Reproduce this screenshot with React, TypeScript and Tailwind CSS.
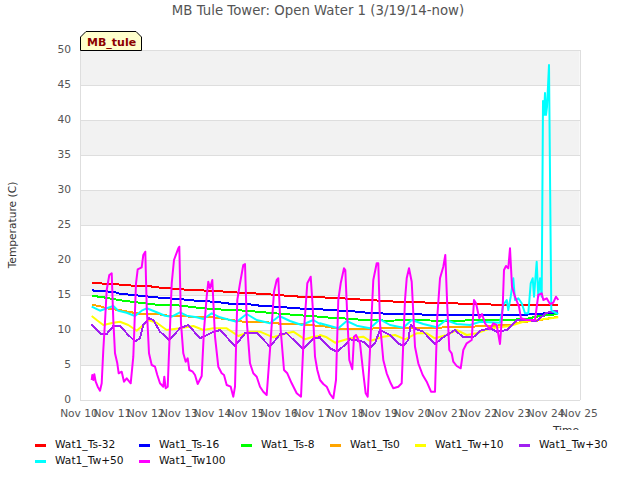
import React from 'react';

type Pt = [number, number];

// traced from the plot; x/3 + offset, 240 + y/3 gives page pixels
const left = (p: Pt[]) => p.map(([x, y]) => `${(x / 3).toFixed(1)},${(240 + y / 3).toFixed(1)}`).join(' ');
const right = (p: Pt[]) => p.map(([x, y]) => `${(320 + x / 3).toFixed(1)},${(240 + y / 3).toFixed(1)}`).join(' ');

const series: { color: string; crisp?: boolean; l: Pt[]; r: Pt[] }[] = [
  {
    color: '#ff0000',
    crisp: true,
    l: [[275,128],[295,130],[350,133],[400,137],[450,139],[480,143],[520,146],[560,149],[600,151],[660,154],[700,157],[760,160],[820,164],[900,170],[960,172]],
    r: [[0,172],[50,174],[100,177],[140,180],[200,183],[240,186],[310,186],[320,189],[400,189],[420,191],[510,192],[515,195],[715,195]],
  },
  {
    color: '#0000ff',
    crisp: true,
    l: [[275,150],[285,153],[340,155],[360,161],[400,165],[450,170],[490,174],[540,177],[570,181],[610,183],[650,186],[690,191],[740,192],[780,197],[830,200],[880,204],[920,207],[960,208]],
    r: [[0,208],[35,210],[60,212],[100,214],[140,218],[200,221],[300,222],[310,225],[540,225],[600,225],[650,222],[715,217]],
  },
  {
    color: '#00ff00',
    crisp: true,
    l: [[275,167],[310,172],[345,178],[370,182],[420,188],[470,194],[520,195],[560,199],[600,204],[670,209],[740,212],[790,217],[850,222],[900,226],[960,230]],
    r: [[0,230],[40,234],[90,236],[130,240],[210,242],[260,240],[400,243],[470,240],[570,240],[620,236],[660,228],[715,222]],
  },
  {
    color: '#ffa500',
    crisp: true,
    l: [[275,195],[295,197],[320,205],[370,212],[420,222],[470,222],[510,228],[540,228],[600,232],[640,232],[680,238],[730,245],[800,247],[850,252],[900,252],[960,258]],
    r: [[0,257],[60,267],[200,265],[410,262],[500,258],[570,255],[600,247],[650,242],[715,230]],
  },
  {
    color: '#ffff00',
    l: [[275,228],[290,240],[310,255],[340,248],[360,245],[385,255],[410,272],[430,255],[445,240],[470,248],[500,270],[540,265],[580,258],[610,270],[640,265],[680,265],[715,288],[750,275],[780,275],[820,292],[860,280],[880,275],[915,298],[940,290],[960,288]],
    r: [[0,285],[20,292],[45,308],[90,295],[130,290],[150,303],[190,290],[225,285],[255,298],[290,280],[320,280],[345,295],[380,285],[410,270],[440,285],[470,280],[510,265],[570,258],[610,245],[650,240],[715,232]],
  },
  {
    color: '#a020f0',
    crisp: true,
    l: [[275,253],[290,268],[305,283],[320,282],[340,258],[360,258],[385,285],[405,304],[420,295],[430,255],[447,235],[460,240],[480,275],[508,300],[540,265],[565,255],[600,295],[635,278],[660,270],[705,318],[735,280],[770,278],[810,320],[840,283],[860,280],[910,328],[940,295],[960,292]],
    r: [[0,295],[30,325],[50,335],[75,315],[90,298],[130,305],[150,325],[165,310],[180,270],[210,285],[235,310],[250,318],[265,300],[272,255],[290,268],[310,275],[345,312],[370,292],[405,270],[430,292],[460,292],[480,272],[510,265],[530,275],[560,270],[590,240],[650,242],[680,218],[715,212]],
  },
  {
    color: '#00ffff',
    l: [[275,200],[300,212],[320,205],[340,198],[355,212],[380,218],[405,228],[425,212],[440,205],[470,217],[495,227],[515,230],[540,217],[560,227],[590,232],[610,237],[635,220],[660,232],[690,240],[710,245],[740,222],[770,240],[810,250],[838,228],[870,243],[905,255],[940,240],[960,252]],
    r: [[0,250],[30,258],[55,265],[80,243],[110,257],[150,265],[180,238],[210,255],[250,263],[275,240],[310,252],[350,262],[378,240],[410,252],[450,255],[480,245],[540,248],[550,195],[560,180],[565,210],[572,170],[580,115],[585,180],[595,175],[605,190],[615,220],[625,220],[632,130],[638,115],[642,170],[650,65],[655,170],[660,115],[665,170],[669,-417],[672,-375],[675,-441],[678,-375],[681,-399],[687,-525],[691,-100],[694,210],[700,215],[715,222]],
  },
  {
    color: '#ff00ff',
    l: [[275,420],[277,405],[280,420],[283,403],[287,425],[293,440],[300,452],[305,430],[310,330],[315,245],[320,150],[328,105],[335,100],[340,240],[345,340],[352,370],[356,400],[365,395],[372,425],[380,415],[392,430],[400,350],[408,130],[413,88],[425,82],[430,45],[436,35],[440,200],[447,340],[455,375],[465,380],[472,405],[480,430],[490,440],[493,410],[497,445],[503,440],[515,130],[522,60],[535,25],[538,20],[543,250],[550,340],[557,365],[563,355],[568,390],[578,395],[585,405],[593,432],[605,408],[612,270],[620,170],[625,125],[630,145],[637,120],[645,290],[655,380],[665,400],[672,405],[680,435],[692,440],[700,470],[705,440],[712,180],[720,130],[730,75],[735,72],[740,240],[750,370],[760,400],[770,410],[780,440],[790,455],[800,465],[810,330],[822,155],[830,120],[835,115],[842,270],[852,390],[862,400],[875,430],[890,460],[903,470],[912,270],[922,130],[932,110],[938,200],[945,350],[952,390],[960,420]],
    r: [[0,420],[10,432],[20,440],[30,462],[40,475],[48,420],[55,180],[62,130],[72,85],[76,90],[82,230],[88,360],[97,388],[102,290],[108,285],[120,310],[130,400],[137,460],[143,470],[150,330],[160,120],[170,70],[175,70],[180,250],[190,360],[200,400],[212,430],[220,445],[235,440],[245,430],[255,180],[260,115],[267,85],[275,125],[285,320],[295,370],[308,405],[320,425],[333,455],[345,455],[352,230],[360,115],[370,80],[376,45],[382,200],[388,330],[395,340],[400,365],[410,378],[422,385],[430,330],[440,310],[455,300],[462,180],[468,190],[478,235],[486,222],[495,250],[510,268],[520,250],[530,255],[540,312],[548,200],[552,90],[558,78],[565,85],[570,25],[576,140],[585,170],[597,200],[603,235],[620,240],[645,240],[655,165],[665,160],[670,180],[680,175],[690,192],[700,188],[708,170],[715,180]],
  },
];

const legend = [
  { name: 'Wat1_Ts-32', color: 'bg-[#ff0000]' },
  { name: 'Wat1_Ts-16', color: 'bg-[#0000ff]' },
  { name: 'Wat1_Ts-8', color: 'bg-[#00ff00]' },
  { name: 'Wat1_Ts0', color: 'bg-[#ffa500]' },
  { name: 'Wat1_Tw+10', color: 'bg-[#ffff00]' },
  { name: 'Wat1_Tw+30', color: 'bg-[#a020f0]' },
  { name: 'Wat1_Tw+50', color: 'bg-[#00ffff]' },
  { name: 'Wat1_Tw100', color: 'bg-[#ff00ff]' },
];

const yTicks = [50, 45, 40, 35, 30, 25, 20, 15, 10, 5, 0];
const days = [10, 11, 12, 13, 14, 15, 16, 17, 18, 19, 20, 21, 22, 23, 24, 25];
const yPos = (v: number) => 400 - v * 7;

export default function App() {
  return (
    <div className="w-[640px] h-[480px] bg-white overflow-hidden font-['DejaVu_Sans',sans-serif]">
      <div className="h-[24px] pt-[3px] pr-[4px] text-center text-[13.3px] leading-[16px] text-[#555555]">
        MB Tule Tower: Open Water 1 (3/19/14-now)
      </div>

      <svg className="block w-[640px] h-[406px]" viewBox="0 24 640 406" fontFamily="'DejaVu Sans', sans-serif" fontSize="10.67">
        {[45, 35, 25, 15, 5].map((v) => (
          <rect key={v} x="80.5" y={yPos(v + 5)} width="499" height="35" fill="#f2f2f2" />
        ))}
        {yTicks.map((v) => (
          <line key={v} x1="80" x2="580" y1={yPos(v) + 0.5} y2={yPos(v) + 0.5} stroke="#dedede" />
        ))}
        <line x1="80.5" x2="80.5" y1="50" y2="400" stroke="#dedede" />
        <line x1="580.5" x2="580.5" y1="50" y2="400" stroke="#dedede" />

        {yTicks.map((v) => (
          <text key={v} x="71" y={yPos(v) + 3} textAnchor="end" fill="#555555">{v}</text>
        ))}
        {days.map((d, i) => (
          <text key={d} x={79 + i * 33.33} y="417" textAnchor="middle" fill="#555555">Nov {d}</text>
        ))}
        <text transform="translate(16 225) rotate(-90)" textAnchor="middle" fill="#333333">Temperature (C)</text>
        <text x="579" y="433.5" textAnchor="end" fill="#333333">Time</text>

        {series.map((s) => (
          <polyline
            key={s.color}
            points={`${left(s.l)} ${right(s.r)}`}
            fill="none"
            stroke={s.color}
            strokeWidth="2"
            strokeLinejoin="round"
            shapeRendering={s.crisp ? 'crispEdges' : undefined}
          />
        ))}

        <path d="M80.5 50.5V37L86 31.5H136L141.5 37V50.5Z" fill="#ffffcc" stroke="#000000" />
        <text x="87" y="46" fill="#8b0000" fontWeight="bold" fontSize="11">MB_tule</text>
      </svg>

      <div className="grid grid-cols-[104px_102px_89px_85px_104px_auto] pl-[35px] pt-[7px] text-[10.67px] leading-[16px] text-[#111111]">
        {legend.map((item) => (
          <div key={item.name} className="flex items-center gap-[9px]">
            <span className={`w-[11px] h-[3px] ${item.color}`} />
            <span>{item.name}</span>
          </div>
        ))}
      </div>
    </div>
  );
}
